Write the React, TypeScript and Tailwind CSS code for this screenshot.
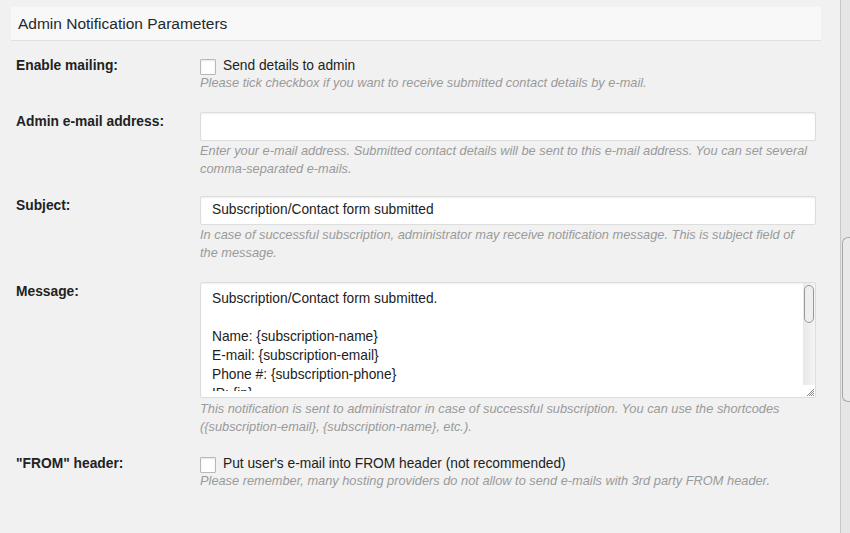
const font = { fontFamily: '"Liberation Sans", Arial, sans-serif' };

function Checkbox() {
  return (
    <span className="mt-[3px] block h-[16px] w-[16px] shrink-0 rounded-[1px] border border-[#b4b9be] bg-white shadow-[inset_0_1px_2px_rgba(0,0,0,0.1)]" />
  );
}

function Desc({ children }: { children: React.ReactNode }) {
  return <p className="text-[12.8px] italic leading-[18px] text-[#9a9a9a]">{children}</p>;
}

function Row({ label, children, className = '' }: { label: string; children: React.ReactNode; className?: string }) {
  return (
    <div className={`flex ${className}`}>
      <div className="w-[200px] shrink-0 pl-4 pt-[1px] text-[13.8px] font-bold leading-[18px] text-[#222]">{label}</div>
      <div className="w-[616px]">{children}</div>
    </div>
  );
}

function CheckLine({ text }: { text: string }) {
  return (
    <div className="flex h-[18px] items-start gap-[7px]">
      <Checkbox />
      <span className="pt-[1px] text-[13.75px] leading-[17px] text-[#222]">{text}</span>
    </div>
  );
}

function TextInput({ value }: { value?: string }) {
  return (
    <div className="flex h-[29px] items-center rounded-[2px] border border-[#dddddd] bg-white px-[11px] text-[13.75px] text-[#222] shadow-[inset_0_1px_2px_rgba(0,0,0,0.07)]">
      {value}
    </div>
  );
}

function Grip() {
  return (
    <svg width="10" height="10" viewBox="0 0 10 10" className="block">
      <path d="M9 2 L2 9 M9 4 L4 9 M9 6 L6 9 M9 8 L8 9" stroke="#888" strokeWidth="1" />
    </svg>
  );
}

export default function App() {
  return (
    <div className="flex h-[533px] w-[850px] overflow-hidden bg-[#f1f1f1]" style={font}>
      <div className="flex-1 pl-[11px] pr-[19px] pt-[7px]">
        <div className="flex h-[34px] items-center border-b border-[#e1e1e1] bg-[#f8f8f8] px-[7px] text-[15.5px] text-[#23282d]">
          Admin Notification Parameters
        </div>

        <div className="-ml-[11px] pt-[15px]">
          <Row label="Enable mailing:">
            <CheckLine text="Send details to admin" />
            <Desc>Please tick checkbox if you want to receive submitted contact details by e-mail.</Desc>
          </Row>

          <Row label="Admin e-mail address:" className="mt-[20px]">
            <TextInput />
            <div className="pt-[1px] pr-[4px]">
              <Desc>
                Enter your e-mail address. Submitted contact details will be sent to this e-mail address. You can set several
                comma-separated e-mails.
              </Desc>
            </div>
          </Row>

          <Row label="Subject:" className="mt-[18px]">
            <TextInput value="Subscription/Contact form submitted" />
            <div className="pt-[1px] pr-[4px]">
              <Desc>
                In case of successful subscription, administrator may receive notification message. This is subject field of
                the message.
              </Desc>
            </div>
          </Row>

          <Row label="Message:" className="mt-[20px]">
            <div className="flex h-[116px] overflow-hidden rounded-[2px] border border-[#dddddd] bg-white shadow-[inset_0_1px_2px_rgba(0,0,0,0.07)]">
              <div className="mb-[6px] flex-1 overflow-hidden px-[11px] pt-[6px] text-[13.75px] leading-[19px] text-[#222]">
                <div>Subscription/Contact form submitted.</div>
                <div className="h-[19px]" />
                <div>Name: {'{subscription-name}'}</div>
                <div>E-mail: {'{subscription-email}'}</div>
                <div>Phone #: {'{subscription-phone}'}</div>
                <div>IP: {'{ip}'}</div>
              </div>
              <div className="flex w-[12px] flex-col bg-gradient-to-r from-[#e8e8e8] to-[#f4f4f4]">
                <div className="mx-[1px] mt-[2px] h-[38px] rounded-full border border-[#999] bg-[#eeeeee]" />
                <div className="flex-1" />
                <div className="flex h-[12px] items-end justify-end bg-white">
                  <Grip />
                </div>
              </div>
            </div>
            <div className="pt-[2px] pr-[4px]">
              <Desc>
                This notification is sent to administrator in case of successful subscription. You can use the shortcodes
                ({'{subscription-email}'}, {'{subscription-name}'}, etc.).
              </Desc>
            </div>
          </Row>

          <Row label={'"FROM" header:'} className="mt-[18px]">
            <CheckLine text="Put user's e-mail into FROM header (not recommended)" />
            <Desc>Please remember, many hosting providers do not allow to send e-mails with 3rd party FROM header.</Desc>
          </Row>
        </div>
      </div>

      <div className="flex w-[10px] flex-col border-l border-[#c8c8c8] bg-[#e6e6e6]">
        <div className="ml-[1px] mt-[237px] h-[165px] rounded-l-[6px] rounded-r-none border border-r-0 border-[#a8a8a8] bg-[#eaeaea]" />
      </div>
    </div>
  );
}
